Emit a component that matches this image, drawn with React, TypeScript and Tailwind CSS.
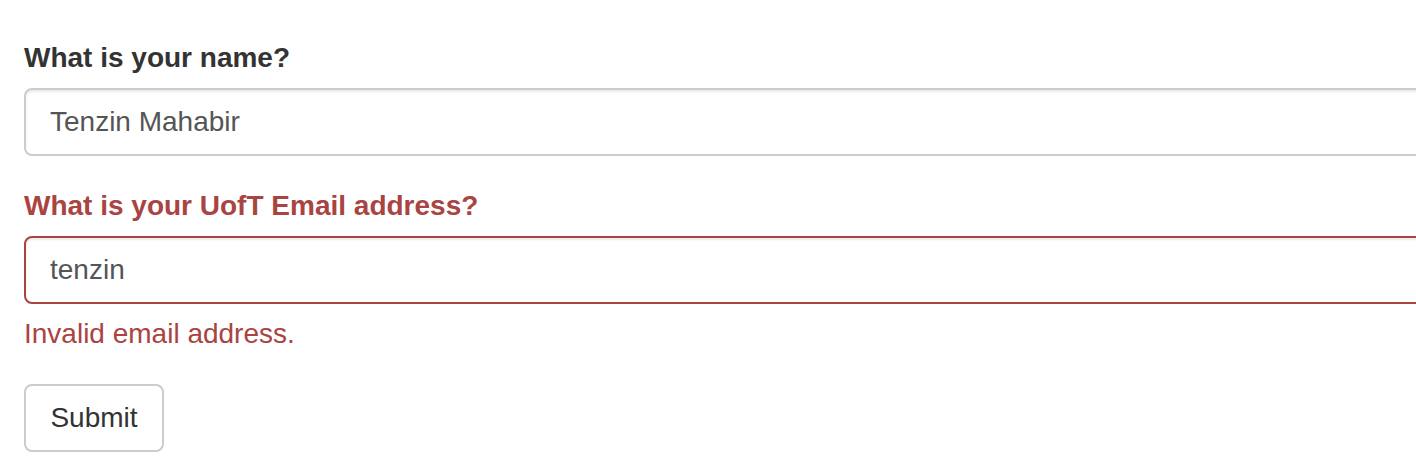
export default function App() {
  return (
    <div className="w-[1416px] h-[468px] overflow-hidden bg-white pl-[24px] pt-[38px] font-['Liberation_Sans',Arial,sans-serif] text-[28px] leading-[40px] text-[#333]">
      <div className="mb-[30px]">
        <label className="block font-bold mb-[10px]">What is your name?</label>
        <div className="w-[1440px] h-[68px] rounded-[8px] border-2 border-[#ccc] px-[24px] py-[12px] text-[#555] shadow-[inset_0_2px_2px_rgba(0,0,0,0.075)]">
          Tenzin Mahabir
        </div>
      </div>
      <div className="mb-[30px]">
        <label className="block font-bold mb-[10px] text-[#a94442]">What is your UofT Email address?</label>
        <div className="w-[1440px] h-[68px] rounded-[8px] border-2 border-[#a94442] px-[24px] py-[12px] text-[#555] shadow-[inset_0_2px_2px_rgba(0,0,0,0.075)]">
          tenzin
        </div>
        <div className="mt-[10px] text-[#a94442]">Invalid email address.</div>
      </div>
      <button className="w-[140px] h-[68px] rounded-[8px] border-2 border-[#ccc] bg-white py-[12px] text-center text-[#333]">
        Submit
      </button>
    </div>
  );
}
